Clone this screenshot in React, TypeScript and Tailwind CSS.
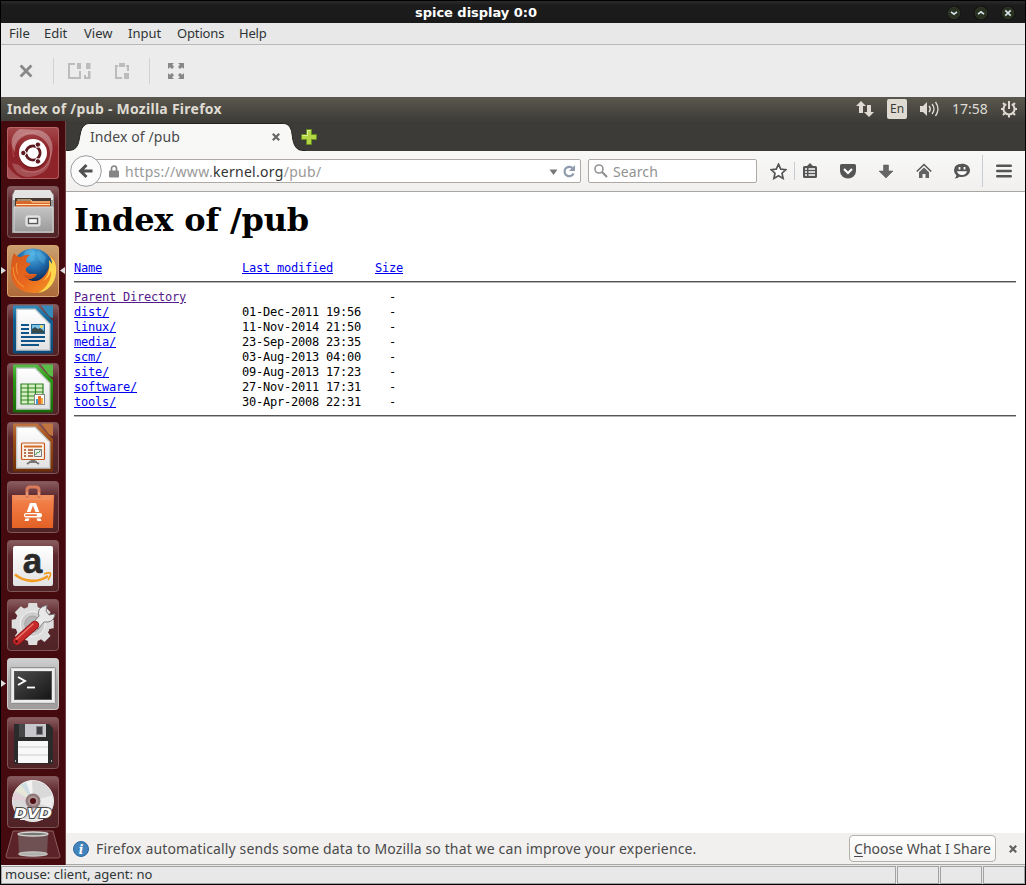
import React from "react";

const UI = "font-['Noto_Sans','Open_Sans',sans-serif]";

/* ---------- host window ---------- */

function RoundButton({ d }: { d: string }) {
  return (
    <svg width="16" height="16" viewBox="0 0 16 16" fill="none">
      <circle cx="8" cy="8" r="7" fill="#0c0c0a" />
      <circle cx="8" cy="8" r="6" fill="#283020" stroke="#3f4a38" strokeWidth=".6" />
      <path d={d} stroke="#d3e2e4" strokeWidth="1.7" />
    </svg>
  );
}

function TitleBar() {
  return (
    <div className="flex h-[23px] w-full items-center border-t border-black bg-linear-to-b from-[#2b2b2b] via-[#1c1c1c] via-20% to-[#1a1a1a] pr-[9px]">
      <div className="flex-1 pl-[414px] pt-px font-['DejaVu_Sans',sans-serif] text-[13px] font-bold leading-[16px] text-white">
        <span className="tracking-[-0.03px]">spice display 0:0</span>
      </div>
      <div className="flex gap-[11px] pt-px">
        <RoundButton d="M5 6.8l3 2.4 3-2.4" />
        <RoundButton d="M5 9.2l3-2.4 3 2.4" />
        <RoundButton d="M5.3 5.3l5.4 5.4M10.7 5.3l-5.4 5.4" />
      </div>
    </div>
  );
}

function MenuBar() {
  return (
    <div className={`flex h-[22px] items-start border-b border-[#b9b9b9] bg-[#e8e8e8] pl-2 text-[13px] leading-[20px] text-[#2e3436] ${UI}`}>
      <span className="w-[35px]">File</span>
      <span className="w-[40px]">Edit</span>
      <span className="w-[44px]">View</span>
      <span className="w-[49px]">Input</span>
      <span className="w-[62px] tracking-[-0.15px]">Options</span>
      <span className="tracking-[-0.2px]">Help</span>
    </div>
  );
}

function ToolBar() {
  return (
    <div className="flex h-[52px] items-center bg-[#ececec] pl-[18px]">
      <svg width="14" height="14" viewBox="0 0 14 14" stroke="#888" strokeWidth="2.8">
        <path d="M1.6 1.6l10.8 10.8M12.4 1.6L1.6 12.4" />
      </svg>
      <div className="ml-5 h-[26px] w-px bg-[#d2d2d2]" />
      <svg className="ml-[14px]" width="23" height="16" viewBox="0 0 23 16" fill="#bcbcbc">
        <path d="M0 0h7v2H2v12h9V8h2v8H0zM9 0h4v6H9zM18 0h4.500v6H18zM20 8h2.500v8H16v-4h2v2h2z" />
      </svg>
      <svg className="ml-[24px]" width="15" height="16" viewBox="0 0 15 16" fill="#bcbcbc">
        <path d="M0 2h3v2H2v10h5v2H0zM4 0h6v4H4zM11 2h3v6h-2V4h-1zM9 10h5v6H9z" />
      </svg>
      <div className="ml-[19px] h-[26px] w-px bg-[#d2d2d2]" />
      <svg className="ml-[18px]" width="16" height="16" viewBox="0 0 16 16" fill="#888">
        <path d="M0 0h6L4.400 1.600 6 4 4 6 1.800 4.200 0 6zM16 0v6l-1.800-1.800L12 6l-2-2 1.800-2.200L10 0zM0 16v-6l1.800 1.800L4 10l2 2-1.800 2.200L6 16zM16 16h-6l1.800-1.800L10 12l2-2 2.200 1.800L16 10z" />
      </svg>
    </div>
  );
}

/* ---------- guest panel ---------- */

function Panel() {
  return (
    <div className={`flex h-[24px] items-center bg-linear-to-b from-[#5a574e] to-[#3e3d38] pl-[6px] pr-[7px] text-[15px] leading-[22px] text-[#dfdbd2] ${UI}`}>
      <span className="flex-1 pb-[2px]">
        <span className="text-[14px] font-bold tracking-[0.26px]">Index of /pub - Mozilla Firefox</span>
      </span>
      <svg width="18" height="18" viewBox="0 0 18 18" fill="#dfdbd2">
        <path d="M5 1l5 5H7v7H3V6H0zM13 17l-5-5h3V5h4v7h3z" />
      </svg>
      <span className="ml-[13px] flex h-[20px] w-[20px] items-center justify-center rounded-[2px] bg-[#dfdbd2] text-[12px] leading-none text-[#3c3b37]">En</span>
      <svg className="ml-[12px]" width="22" height="18" viewBox="0 0 22 18" fill="none" stroke="#dfdbd2">
        <path d="M1 6h3l4-4v14l-4-4H1z" fill="#dfdbd2" stroke="none" />
        <path d="M10 6q2.500 3 0 6" strokeWidth="1.500" />
        <path d="M13 4q4 5 0 10M16.500 2q5 7 0 14" strokeWidth="1.300" />
      </svg>
      <span className="ml-[11px] w-[36px] whitespace-nowrap text-[14px]">17:58</span>
      <svg className="ml-[12px]" width="18" height="18" viewBox="0 0 18 18" fill="none" stroke="#dfdbd2">
        <path d="M6.200 4.200a5.500 5.500 0 1 0 5.600 0" strokeWidth="2" />
        <path d="M9 1v8" strokeWidth="2" />
        <path d="M1 9h2M15 9h2M9 15v2.500M3 3l1.700 1.700M15 3l-1.700 1.700M3 15l1.700-1.700M15 15l-1.700-1.700" strokeWidth="2" />
      </svg>
    </div>
  );
}

/* ---------- launcher ---------- */

const Dash = () => (
  <>
    <rect width="52" height="52" rx="3" fill="url(#dash)" />
    <path d="M8 25C7 8 28 1 39 15c4 5 5 12 3 19C50 20 44 5 31 3L13 2C4 7 2 17 8 25z" fill="#fff" opacity=".32" />
    <path d="M12 38c12 12 28 5 31-10 3 12-8 22-23 22-8-1-13-6-15-14zM0 38c5 7 8 10 16 14H3q-3 0-3-3z" fill="#fff" opacity=".2" />
    <path d="M7 30C2 14 13 4 29 6M44 26c-1 16-14 23-30 17" stroke="#e5a4a4" strokeWidth=".8" fill="none" opacity=".4" />
    <circle cx="26" cy="27.500" r="14" fill="#5b1218" opacity=".6" />
    <circle cx="26" cy="26" r="14" fill="#fff" />
    <circle cx="26" cy="26" r="7" fill="none" stroke="#5f1a20" strokeWidth="3" />
    <path d="M26 26H14.500M26 26l6-10.400M26 26l6 10.400" stroke="#fff" strokeWidth="1" />
    <g stroke="#fff" strokeWidth="1" fill="#5f1a20">
      <circle cx="16.300" cy="26" r="2.700" /><circle cx="30.900" cy="17.600" r="2.700" /><circle cx="30.900" cy="34.400" r="2.700" />
    </g>
    <circle cx="26" cy="26" r="5.500" fill="#fff" />
  </>
);

const Files = () => (
  <>
    <path d="M8 4h35l4 5v38H5V9z" fill="#9b9b9b" />
    <path d="M8 4h35l3 5v5H6V9z" fill="#e3e3e3" />
    <path d="M8 12h36v8H8z" fill="#47392f" />
    <path d="M9 15h34v7H9z" fill="#d9662a" />
    <path d="M10 14h14l1 2h18M9 18.500h34" stroke="#ffe0ab" strokeWidth="1" fill="none" />
    <path d="M7 21h39v25H7z" fill="url(#drawer)" stroke="#dedede" strokeWidth=".8" />
    <rect x="19" y="30" width="14" height="10" rx="1.500" fill="#d8d8d8" stroke="#eee" />
    <rect x="21.500" y="32.500" width="9" height="5" fill="#f5f5f5" stroke="#595959" strokeWidth="1.300" />
  </>
);

const Firefox = () => (
  <>
    <circle cx="26" cy="24" r="20.500" fill="url(#globe)" />
    <path d="M18 6l7-2 4 4-4 3 3 4-6 3-6-4zM31 5l8 7-2 7-5-4-2-6z" fill="#69c7ef" opacity=".35" />
    <path d="M7 8c2 3 4 4 7 4q5-3 9-2c-3 2-4 4-4 7l5 2-5 4c-1 2 1 5 4 6h7c-2 4-6 5-9 5 5 4 13 2 17-4 4-5 5-9 4-15l3 4q1-6-3-10c6 5 8 11 7 18-1 12-11 21-22 21C11 48 3 38 4 24 4 18 5 12 7 8z" fill="url(#fox)" />
    <path d="M36 36c5-4 7-11 6-21l3 4q0-6-3-9c6 5 8 11 7 18-1 11-9 19-18 20 8-4 14-14 13-22-2 5-4 8-8 10z" fill="#ffe052" opacity=".9" />
    <path d="M6 22c0 9 4 16 11 20M10 18c-1 3-1 7 1 11" stroke="#f9a23c" strokeWidth="1.200" fill="none" opacity=".7" />
    <path d="M17 29c3 3 8 1 13 0-2 4-6 5-9 5-3-1-4-3-4-5z" fill="#c9501c" opacity=".65" />
  </>
);

function Page({ id, color, dark, light, children }: { id: string; color: string; dark: string; light: string; children?: React.ReactNode }) {
  return (
    <>
      <linearGradient id={id} x2="0" y2="1"><stop stopColor={light} /><stop offset=".3" stopColor={color} /><stop offset="1" stopColor={dark} /></linearGradient>
      <path d="M7 1.500h23.500L46 17v31q0 1.500-1.500 1.500h-37Q6 49.500 6 48V3q0-1.500 1-1.500z" fill={`url(#${id})`} />
      <path d="M34 1.500h12V14q-3 0-5-3z" fill={light} />
      <path d="M9.700 5.200h18.500L42.800 20v26H9.700z" fill="url(#paper)" stroke="#c4c9cb" strokeWidth="1.300" />
      {children}
    </>
  );
}

const Writer = () => (
  <Page id="pw" color="#126295" dark="#0b4a78" light="#348bb9">
    <path d="M14 21h8M14 25h8M14 29h8M14 33h24M14 37h24M14 41h18" stroke="#0f5587" strokeWidth="2" />
    <rect x="24.500" y="20.500" width="13" height="9" fill="#7cc6ec" stroke="#24638c" />
    <circle cx="34.500" cy="22.500" r="1.500" fill="#ffdc4e" />
    <path d="M25 29v-4l3-2 3 2 2-1 4 3v2z" fill="#384b4b" />
  </Page>
);

const Calc = () => (
  <Page id="pc" color="#2d9a16" dark="#176a05" light="#58bc46">
    <path d="M14 21h22v20H14z" fill="#d8f0c1" />
    <path d="M14 21h22v20H14zM14 25h22M14 29h22M14 33h22M14 37h22M21 21v20M28.500 21v20" fill="none" stroke="#2e8426" strokeWidth="1.200" />
    <rect x="27.500" y="31.500" width="10" height="10" fill="#fff" stroke="#858585" />
    <path d="M29 36h2v5h-2z" fill="#4399d2" /><path d="M31 33h3v8h-3z" fill="#e87125" /><path d="M34 35h2v6h-2z" fill="#f6ab45" />
  </Page>
);

const Impress = () => (
  <Page id="pi" color="#a14f1a" dark="#6e2e07" light="#c07440">
    <path d="M26 38l-6 4M26 38l6 4M22 40h8" stroke="#777" strokeWidth="2" />
    <rect x="14.500" y="21" width="23" height="16.500" rx="1" fill="#faf2e8" stroke="#c4581f" strokeWidth="1.200" />
    <path d="M17 24.500h18" stroke="#d16c2a" strokeWidth="2" />
    <path d="M17 28h2M17 31h2M17 34h2M21 28h5M21 31h5M21 34h5" stroke="#a24920" strokeWidth="1.500" />
    <path d="M27.500 27.500h7v7h-7z" fill="#eee" stroke="#777" /><path d="M28.500 33l2-3 1 1 2-3" stroke="#45a344" fill="none" />
  </Page>
);

const Software = () => (
  <>
    <path d="M5 14h42l-1 33H5z" fill="url(#bag)" />
    <path d="M5 14h42l-4 5H9z" fill="#ef8d5c" />
    <path d="M20 17v-8q0-3 3-3h6q3 0 3 3v8" fill="none" stroke="#d97b59" strokeWidth="3" />
    <path d="M20 15v-4M32 15v-4" stroke="#f1b293" />
    <path d="M23 22h6l3.300 9h-3.800L26 24.500 23.500 31h-3.800zM18.500 37.500h4L21.500 40h-4zM29.500 37.500h4l1 2.500h-4z" fill="#fff" />
    <rect x="17" y="32" width="18" height="4.500" rx="2" fill="#fff" /><path d="M19 34.200h10" stroke="#ec713c" strokeWidth="1.800" strokeLinecap="round" />
  </>
);

const Amazon = () => (
  <>
    <rect x="6" y="6" width="40" height="40" rx="2" fill="url(#paper)" />
    <text x="25.500" y="33" textAnchor="middle" fontFamily="Liberation Sans, sans-serif" fontSize="35" fontWeight="700" fill="#292929" stroke="#292929" strokeWidth=".6">a</text>
    <path d="M8 34.500c10 8 23 8.500 33 1.500" stroke="#f29a20" strokeWidth="2.600" fill="none" />
    <path d="M37 34q6-2 6.500-.5T41 40" stroke="#f29a20" strokeWidth="1.600" fill="none" />
  </>
);

const Settings = () => (
  <>
    <g fill="#dedede">
      {[0, 45, 90, 135].map((a) => (
        <path key={a} d="M21.500 4h8.500l1 6v30l-1 6h-8.500l-1-6V10z" transform={`rotate(${a} 25.700 25)`} />
      ))}
      <circle cx="25.700" cy="25" r="17.500" />
    </g>
    <circle cx="25.700" cy="25" r="12.500" fill="#cdcdcd" stroke="#f5f5f5" />
    <circle cx="25.700" cy="25" r="8" fill="#b5b5b5" stroke="#999" strokeWidth=".7" />
    <path d="M26 24l6-7q-2-6 3-9l5-2-1 6 3 4 6-1q-1 7-7 8l-4 0-6 7z" fill="#e8e8e8" stroke="#777" strokeWidth=".9" />
    <path d="M28 26L10 42" stroke="#8d1518" strokeWidth="8.500" strokeLinecap="round" />
    <path d="M28 26L10 42" stroke="#c62a2b" strokeWidth="7" strokeLinecap="round" />
    <path d="M26 25L9.500 40" stroke="#ec7468" strokeWidth="1.600" strokeLinecap="round" />
    <circle cx="9.500" cy="42.500" r="1.400" fill="#641114" />
  </>
);

const Terminal = () => (
  <>
    <rect x=".5" y=".5" width="51" height="51" rx="3" fill="url(#termTile)" stroke="#ccc" />
    <rect x="3.500" y="9.500" width="45" height="36" rx="1" fill="#d9d9d9" stroke="#919191" />
    <rect x="5" y="11" width="42" height="33" fill="#eee" />
    <rect x="7.500" y="13.500" width="37" height="28" fill="url(#dark)" stroke="#555" />
    <path d="M11 19l7 4-7 4" fill="none" stroke="#fff" strokeWidth="1.900" /><path d="M20 29.500h8" stroke="#fff" strokeWidth="1.800" />
  </>
);

const Floppy = () => (
  <>
    <path d="M7 7h35l4 4v36H7z" fill="#2b2b2b" />
    <path d="M12 7h7v13h-7z" fill="#474747" /><path d="M18 7h21v13H18z" fill="#c7c7cc" /><rect x="29.500" y="9.500" width="6" height="8" fill="#3f3f43" stroke="#828288" />
    <path d="M11 24h30v22H11z" fill="#f8f8f8" /><path d="M11 30h30M11 38h30" stroke="#ccc" />
    <path d="M8 43h1v2H8zM44 43h1v2h-1z" fill="#aaa" />
  </>
);

const Dvd = () => (
  <>
    <circle cx="26" cy="25" r="20.500" fill="#d9d9d9" stroke="#f0f0f0" />
    <path d="M26 25L8 15l7-7z" fill="#e6e7d6" /><path d="M26 25L16 7l9-3z" fill="#f3f3f3" /><path d="M26 25l20-6-1 13z" fill="#ececec" /><path d="M26 25L5 24l2-7z" fill="#e3d0d8" /><path d="M26 25L14 9l5-3z" fill="#cddde3" />
    <circle cx="26" cy="25" r="7.500" fill="#927a7b" /><circle cx="26" cy="25" r="5" fill="#ad9899" /><circle cx="26" cy="25" r="3" fill="#500f12" />
    <text x="26" y="42" textAnchor="middle" fontFamily="DejaVu Sans, sans-serif" fontStyle="italic" fontSize="14" fontWeight="700" textLength="38" lengthAdjust="spacingAndGlyphs" fill="#fff" stroke="#454545" strokeWidth="1.800" paintOrder="stroke">DVD</text>
    <path d="M13 43.500h23" stroke="#eee" />
  </>
);

const tiles = [Dash, Files, Firefox, Writer, Calc, Impress, Software, Amazon, Settings, Terminal, Floppy, Dvd];

function Launcher() {
  return (
    <div className="relative flex h-[744px] w-[65px] shrink-0 flex-col items-center gap-[7px] overflow-hidden border-r border-[#744448] bg-[#440a0e] pt-[6px]">
      <svg className="absolute" width="0" height="0">
        <defs>
          <linearGradient id="tile" x2="0" y2="1"><stop stopColor="#8a5d60" /><stop offset=".3" stopColor="#5c272d" /><stop offset="1" stopColor="#502327" /></linearGradient>
          <linearGradient id="dash" x2="0" y2="1"><stop stopColor="#a5494d" /><stop offset=".4" stopColor="#8e2429" /><stop offset="1" stopColor="#8e2429" /></linearGradient>
          <linearGradient id="drawer" x2="0" y2="1"><stop stopColor="#c4c4c4" /><stop offset="1" stopColor="#9b9b9b" /></linearGradient>
          <linearGradient id="termTile" x2="0" y2="1"><stop stopColor="#d0d0d0" /><stop offset=".5" stopColor="#a9a6a6" /><stop offset="1" stopColor="#a09c9c" /></linearGradient>
          <linearGradient id="paper" x2="0" y2="1"><stop stopColor="#fff" /><stop offset="1" stopColor="#e2e2e2" /></linearGradient>
          <linearGradient id="dark" x2="1" y2="1"><stop stopColor="#4c4c4c" /><stop offset="1" stopColor="#151515" /></linearGradient>
          <linearGradient id="bag" x2="0" y2="1"><stop stopColor="#f38b59" /><stop offset=".3" stopColor="#f07a42" /><stop offset="1" stopColor="#e36125" /></linearGradient>
          <linearGradient id="fox" x2="1" y2="1"><stop stopColor="#d4581b" /><stop offset=".5" stopColor="#e8661d" /><stop offset="1" stopColor="#f79a25" /></linearGradient>
          <linearGradient id="gold" x2="0" y2="1"><stop stopColor="#cba06f" /><stop offset="1" stopColor="#ad6839" /></linearGradient>
          <radialGradient id="globe" cx=".5" cy=".15" r=".65"><stop stopColor="#4fb2e6" /><stop offset=".55" stopColor="#1f69a9" /><stop offset="1" stopColor="#0d2a57" /></radialGradient>
        </defs>
      </svg>
      {tiles.map((Icon, i) => (
        <svg key={i} className="shrink-0" width="52" height="52" viewBox="0 0 52 52">
          <rect x=".5" y=".5" width="51" height="51" rx="3" fill={i === 2 ? "url(#gold)" : "url(#tile)"} stroke={i === 2 ? "#d6a674" : "#7f565a"} />
          <Icon />
          {i === 0 && <rect x=".5" y=".5" width="51" height="51" rx="3" fill="none" stroke="#c17477" opacity=".7" />}
        </svg>
      ))}
      <svg className="-mt-[5px] shrink-0" width="56" height="30" viewBox="0 0 56 30">
        <path d="M8 1h40l7 25q0 2-2 2H3q-2 0-2-2z" fill="#5c2429" stroke="#8a5c60" />
        <path d="M13 3h30l-1 22q-14 3-28 0z" fill="#756063" opacity=".75" />
        <ellipse cx="28" cy="4" rx="15" ry="2" fill="#777" stroke="#d5d5d0" strokeWidth="1.300" />
        <ellipse cx="28" cy="24" rx="14.500" ry="2.200" fill="#b1b1ac" stroke="#ddd" strokeWidth=".8" />
      </svg>
      <svg className="absolute left-0 top-[145px]" width="5" height="9"><path d="M0 1l5 3.500L0 8z" fill="#ddd" /></svg>
      <svg className="absolute right-0 top-[145px]" width="5" height="9"><path d="M5 1L0 4.500 5 8z" fill="#ddd" /></svg>
      <svg className="absolute left-0 top-[558px]" width="5" height="9"><path d="M0 1l5 3.500L0 8z" fill="#ddd" /></svg>
    </div>
  );
}

/* ---------- browser ---------- */

function Tabs() {
  return (
    <div className={`relative flex h-[30px] bg-[#3c3b37] ${UI}`}>
      <svg className="absolute left-0 top-0" width="240" height="30" viewBox="0 0 240 30">
        <path d="M0 29.500h3c6 0 9-4 10-10l1.500-7.500Q16 2.500 24 2.500h193q7 0 8.500 8l1.500 9q2 10 10 10H240" fill="#f8f8f7" stroke="#252421" />
        <path d="M3 30c6 0 10-4 11-10l1-7Q17 3 24 3h192q7 0 9 8l1 9q2 10 11 10z" fill="#f8f8f7" />
      </svg>
      <div className="relative flex w-full items-center pl-[24px] pt-[2px] text-[#4a4a4a]">
        <span className="w-[182px] text-[14px] leading-[20px] tracking-[0.1px]">Index of /pub</span>
        <svg width="8" height="8" viewBox="0 0 8 8" stroke="#666" strokeWidth="2.200"><path d="M.8.8l6.400 6.400M7.200.8L.8 7.200" /></svg>
        <svg className="ml-[21px]" width="16" height="16" viewBox="0 0 16 16"><path d="M5.500.5h5v5h5v5h-5v5h-5v-5h-5v-5h5z" fill="#b5d644" stroke="#668d20" /><path d="M6.500 1.500h3M1.500 6.500h5v-5" stroke="#dff09a" fill="none" /></svg>
      </div>
    </div>
  );
}

const ink = "#555";

function Navigation() {
  return (
    <div className={`flex h-[41px] items-center border-b border-[#aaa6a1] bg-linear-to-b from-[#f8f8f7] to-[#f1f0ef] text-[14px] leading-[20px] ${UI}`}>
      <svg className="relative z-10 ml-[4px] shrink-0" width="32" height="32" viewBox="0 0 32 32">
        <circle cx="16" cy="16" r="15.300" fill="#fbfbfb" stroke="#9a9ca1" />
        <path d="M16.500 10L10.500 16l6 6M11 16h11.500" stroke="#505050" strokeWidth="3" fill="none" />
      </svg>
      <div className="-ml-[10px] flex h-[24px] w-[489px] shrink-0 items-center rounded-[2px] border border-[#aea9a4] bg-white pl-[16px]">
        <svg width="10" height="13" viewBox="0 0 10 13"><path d="M2.500 6V3.500a2.500 2.500 0 0 1 5 0V6" stroke="#858585" strokeWidth="1.700" fill="none" /><rect y="5.500" width="10" height="7" rx="1" fill="#858585" /></svg>
        <span className="ml-[6px] flex-1 pt-[2px] text-[#999] tracking-[0.29px]">https://www.<span className="text-[#333]">kernel.org</span>/pub/</span>
        <svg className="mt-[2px]" width="9" height="6"><path d="M.5.500h8L4.500 6z" fill="#777" /></svg>
        <svg className="ml-[5px] mr-[4px]" width="13" height="13" viewBox="0 0 13 13"><path d="M10.500 8.500A4.700 4.700 0 1 1 9.400 3" stroke="#8d9bac" strokeWidth="2.200" fill="none" /><path d="M12 0v6H6z" fill="#8d9bac" /></svg>
      </div>
      <div className="ml-[7px] flex h-[24px] w-[169px] shrink-0 items-center rounded-[2px] border border-[#aea9a4] bg-white pl-[5px] text-[#929292]">
        <svg width="14" height="14" viewBox="0 0 14 14" stroke="#929292" fill="none"><circle cx="5" cy="5" r="4" strokeWidth="1.600" /><path d="M8 8l5 5" strokeWidth="2.300" /></svg>
        <span className="ml-[5px] pt-[2px] tracking-[0.1px]">Search</span>
      </div>
      <svg className="ml-[13px] shrink-0" width="17" height="17" viewBox="0 0 17 17"><path d="M8.500 1.200l2.200 4.900 5.200.6-3.900 3.500 1.100 5.200-4.600-2.600-4.600 2.600L5 10.200 1.100 6.700l5.200-.6z" fill="#fff" stroke={ink} strokeWidth="1.700" /></svg>
      <div className="ml-[7px] h-[18px] w-px bg-[#c4cbd1]" />
      <svg className="ml-[8px] shrink-0" width="14" height="16" viewBox="0 0 14 16"><path d="M1.500 3H4L7 0l3 3h2.500Q14 3 14 4.500v9q0 1.500-1.500 1.500h-11Q0 15 0 13.500v-9Q0 3 1.500 3z" fill={ink} /><path d="M2 6h2M5.500 6H12M2 9h2M5.500 9H12M2 12h2M5.500 12H12" stroke="#fff" strokeWidth="1.500" /></svg>
      <svg className="ml-[23px] shrink-0" width="16" height="15" viewBox="0 0 16 15"><path d="M1.500 0h13Q16 0 16 1.500V7a8 7.500 0 0 1-16 0V1.500Q0 0 1.500 0z" fill={ink} /><path d="M4 5l4 4 4-4" stroke="#fff" strokeWidth="2.200" fill="none" /></svg>
      <svg className="ml-[23px] shrink-0" width="14" height="15" viewBox="0 0 14 15"><path d="M4.500 1h5v6H14l-7 7-7-7h4.500z" fill="#666" stroke={ink} strokeWidth=".5" /></svg>
      <svg className="ml-[23px] shrink-0" width="16" height="16" viewBox="0 0 16 16"><path d="M.8 8.500L8 1.500l7.200 7" fill="none" stroke={ink} strokeWidth="1.500" /><path d="M8 4.500l5 4.800V15h-3.500v-4h-3v4H3V9.300z" fill="#636363" /></svg>
      <svg className="ml-[22px] shrink-0" width="16" height="16" viewBox="0 0 16 16"><path d="M8 .8c4.500 0 8 2.700 8 6.500S12.500 14 8 14q-1.500 0-2.500-.3Q4 15.500.5 15.500 2.500 14 2.300 12.300 0 10.200 0 7.300 0 .8 8 .8z" fill={ink} /><path d="M5.500 4v2.500M10.500 4v2.500" stroke="#fff" strokeWidth="1.800" /><path d="M3 8.300h10q-1 3.700-5 3.700T3 8.300" fill="#fff" /></svg>
      <div className="ml-[12px] h-[32px] w-px bg-[#c6ccd2]" />
      <svg className="ml-[13px] shrink-0" width="16" height="14" viewBox="0 0 16 14"><path d="M1.300 1.800h13.400M1.300 7h13.400M1.300 12.200h13.400" stroke={ink} strokeWidth="2.600" strokeLinecap="round" /></svg>
    </div>
  );
}

const rows: [string, string][] = [
  ["dist/", "01-Dec-2011 19:56"],
  ["linux/", "11-Nov-2014 21:50"],
  ["media/", "23-Sep-2008 23:35"],
  ["scm/", "03-Aug-2013 04:00"],
  ["site/", "09-Aug-2013 17:23"],
  ["software/", "27-Nov-2011 17:31"],
  ["tools/", "30-Apr-2008 22:31"],
];

function Row({ name, date = "", size = "-", visited = false, head = false }: { name: string; date?: string; size?: string; visited?: boolean; head?: boolean }) {
  const link = visited ? "text-[#551a8b] underline" : "text-[#0000ee] underline";
  return (
    <div className="flex h-[15px]">
      <span className="w-[168px]"><a className={link}>{name}</a></span>
      <span className={head ? "w-[133px]" : "w-[147px]"}>{head ? <a className={link}>{date}</a> : date}</span>
      <span>{head ? <a className={link}>{size}</a> : size}</span>
    </div>
  );
}

const Rule = () => <div className="h-[2px] border-t border-[#555] bg-[#b5b5b5]" />;

function Content() {
  return (
    <div className="h-[641px] bg-white pl-[8px] pr-[9px] text-black">
      <h1 className="h-[69px] pt-[9px] font-['DejaVu_Serif',serif] text-[32px] font-bold leading-[38px] tracking-[-0.16px]">Index of /pub</h1>
      <div className="whitespace-pre font-['DejaVu_Sans_Mono',monospace] text-[12px] leading-[15px] tracking-[-0.224px]">
        <Row head name="Name" date="Last modified" size="Size" />
        <div className="pb-[7px] pt-[5px]"><Rule /></div>
        <Row visited name="Parent Directory" />
        {rows.map(([n, d]) => <Row key={n} name={n} date={d} />)}
        <div className="pt-[5px]"><Rule /></div>
      </div>
    </div>
  );
}

function Notice() {
  return (
    <div className={`flex h-[32px] items-center border-b border-[#aaa6a1] bg-[#f1f0ef] pl-[7px] pr-[8px] text-[14px] leading-[20px] text-[#4a4a4a] ${UI}`}>
      <svg width="16" height="16" viewBox="0 0 16 16"><circle cx="8" cy="8" r="7.500" fill="#4384bd" stroke="#2d679d" /><text x="8" y="12.500" textAnchor="middle" fill="#fff" fontFamily="DejaVu Serif, serif" fontStyle="italic" fontWeight="700" fontSize="12">i</text></svg>
      <span className="ml-[7px] flex-1 whitespace-nowrap tracking-[0.138px]">Firefox automatically sends some data to Mozilla so that we can improve your experience.</span>
      <button className="h-[27px] w-[147px] whitespace-nowrap rounded-[4px] border border-[#b5b0aa] bg-linear-to-b from-white to-[#f4f3f2]"><span className="underline underline-offset-2">C</span>hoose What I Share</button>
      <svg className="ml-[13px]" width="8" height="8" viewBox="0 0 8 8" stroke="#606060" strokeWidth="2.200"><path d="M.8.8l6.400 6.400M7.200.8L.8 7.200" /></svg>
    </div>
  );
}

function StatusBar() {
  const cell = "h-[18px] border border-[#a2a2a2]";
  return (
    <div className={`flex h-[19px] gap-px bg-[#e8e8e8] pt-px text-[13px] leading-[14px] text-[#2e3436] ${UI}`}>
      <div className={`flex-1 pl-[3px] tracking-[0.04px] ${cell}`}>mouse: client, agent: no</div>
      <div className={`w-[42px] ${cell}`} />
      <div className={`w-[42px] ${cell}`} />
      <div className={`w-[42px] ${cell}`} />
    </div>
  );
}

export default function App() {
  return (
    <div className="flex h-[885px] w-[1026px] flex-col overflow-hidden border-x border-b border-black bg-[#e8e8e8]">
      <TitleBar />
      <MenuBar />
      <ToolBar />
      <Panel />
      <div className="flex h-[744px]">
        <Launcher />
        <div className="min-w-0 flex-1">
          <Tabs />
          <Navigation />
          <Content />
          <Notice />
        </div>
      </div>
      <StatusBar />
    </div>
  );
}
